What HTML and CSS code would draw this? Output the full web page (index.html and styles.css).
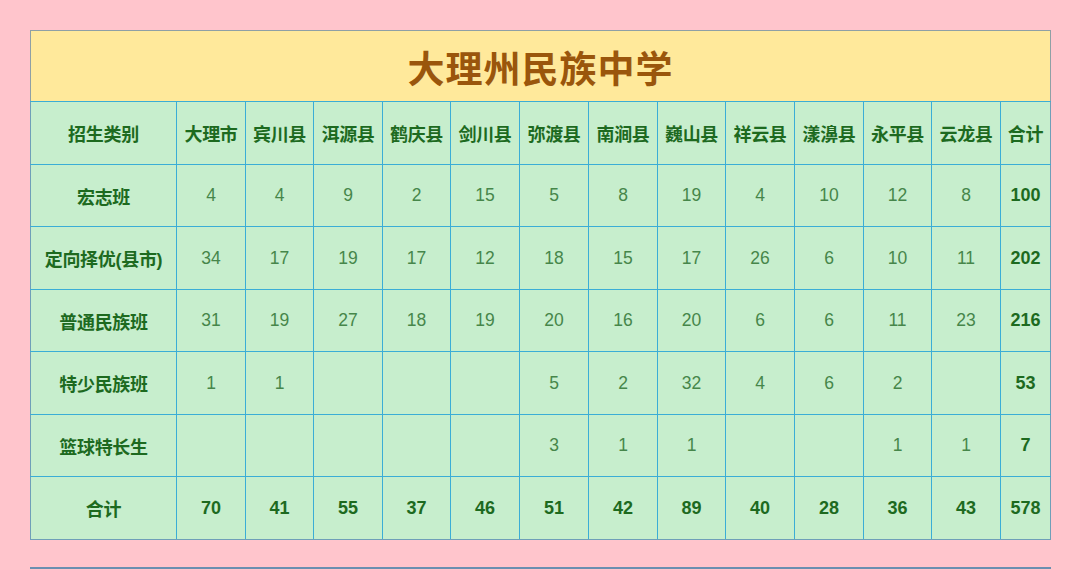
FILE: index.html
```html
<!DOCTYPE html>
<html lang="zh">
<head>
<meta charset="utf-8">
<link rel="stylesheet" href="styles.css">
</head>
<body>
<div class="page">
  <table class="grid">
    <colgroup>
      <col class="w146">
      <col class="w69"><col class="w68"><col class="w69"><col class="w68"><col class="w69"><col class="w69">
      <col class="w69"><col class="w68"><col class="w69"><col class="w69"><col class="w68"><col class="w69">
      <col class="w50">
    </colgroup>
    <tr class="title-row"><td colspan="14" class="title">大理州民族中学</td></tr>
    <tr class="head tall">
      <td>招生类别</td><td>大理市</td><td>宾川县</td><td>洱源县</td><td>鹤庆县</td><td>剑川县</td><td>弥渡县</td><td>南涧县</td><td>巍山县</td><td>祥云县</td><td>漾濞县</td><td>永平县</td><td>云龙县</td><td>合计</td>
    </tr>
    <tr class="short">
      <th>宏志班</th><td>4</td><td>4</td><td>9</td><td>2</td><td>15</td><td>5</td><td>8</td><td>19</td><td>4</td><td>10</td><td>12</td><td>8</td><td class="sum">100</td>
    </tr>
    <tr class="tall">
      <th>定向择优(县市)</th><td>34</td><td>17</td><td>19</td><td>17</td><td>12</td><td>18</td><td>15</td><td>17</td><td>26</td><td>6</td><td>10</td><td>11</td><td class="sum">202</td>
    </tr>
    <tr class="short">
      <th>普通民族班</th><td>31</td><td>19</td><td>27</td><td>18</td><td>19</td><td>20</td><td>16</td><td>20</td><td>6</td><td>6</td><td>11</td><td>23</td><td class="sum">216</td>
    </tr>
    <tr class="tall">
      <th>特少民族班</th><td>1</td><td>1</td><td></td><td></td><td></td><td>5</td><td>2</td><td>32</td><td>4</td><td>6</td><td>2</td><td></td><td class="sum">53</td>
    </tr>
    <tr class="short">
      <th>篮球特长生</th><td></td><td></td><td></td><td></td><td></td><td>3</td><td>1</td><td>1</td><td></td><td></td><td>1</td><td>1</td><td class="sum">7</td>
    </tr>
    <tr class="total tall">
      <th>合计</th><td>70</td><td>41</td><td>55</td><td>37</td><td>46</td><td>51</td><td>42</td><td>89</td><td>40</td><td>28</td><td>36</td><td>43</td><td>578</td>
    </tr>
  </table>
  <div class="next"></div>
</div>
</body>
</html>
```
FILE: styles.css
```css
html, body {
  margin: 0;
  padding: 0;
  height: 100%;
  overflow: hidden;
  background: #ffc5cc;
}
.page {
  padding: 30px 30px 0 30px;
}
.grid {
  width: 1021px;
  border-collapse: collapse;
  table-layout: fixed;
  font-family: "Liberation Sans", "Noto Sans CJK SC", sans-serif;
}
.w146 { width: 146px; }
.w69 { width: 69px; }
.w68 { width: 68px; }
.w50 { width: 50px; }
.grid td, .grid th {
  background: #c7eecd;
  border: 1px solid #3badd6;
  text-align: center;
  vertical-align: middle;
  padding: 0;
  font-size: 17.5px;
  color: #46864a;
  font-weight: normal;
}
.grid .tall > td, .grid .tall > th { height: 62px; }
.grid .short > td, .grid .short > th { height: 61px; }
.grid th,
.grid .head td,
.grid .sum,
.grid .total td {
  font-family: "Liberation Sans", "Noto Sans CJK SC", sans-serif;
  font-weight: bold;
  color: #1d6a1f;
}
.grid th, .grid .head td {
  font-size: 18px;
  letter-spacing: -0.3px;
}
.grid .sum, .grid .total td {
  font-size: 18px;
}
.grid tr > *:first-child { border-left-color: #6f9fb8; }
.grid tr > *:last-child { border-right-color: #6f9fb8; }
.grid .total > * { border-bottom-color: #6f9fb8; }
.grid .title-row td.title {
  background: #ffe99b;
  height: 68px;
  border: 1px solid #8fa0a5;
  border-bottom-color: #3badd6;
  font-size: 37px;
  font-weight: bold;
  color: #9a560c;
  letter-spacing: 1px;
  padding-top: 2px;
  font-family: "Noto Sans CJK SC", sans-serif;
}
.next {
  margin-top: 27px;
  width: 1021px;
  height: 40px;
  border-top: 2px solid #6a8fb0;
  background: #ffc5cc;
}
```
